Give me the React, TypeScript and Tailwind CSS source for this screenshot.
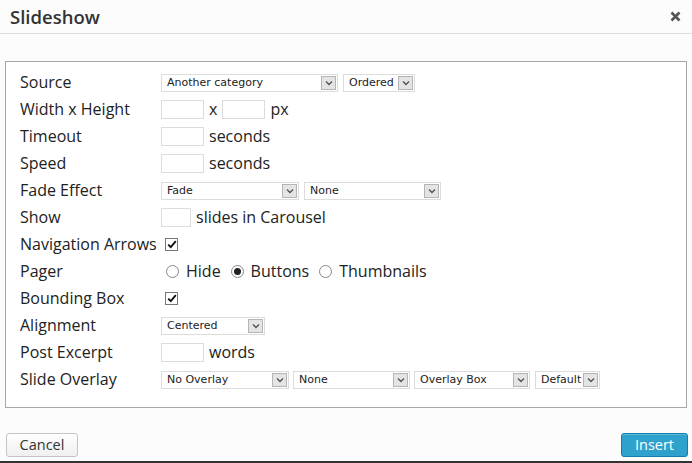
import React from "react";

const label = "font-['Open_Sans',sans-serif] text-[16px] text-[#222]";

function Select({ value, width }: { value: string; width: number }) {
  return (
    <div
      className="flex h-[18px] items-center justify-between border border-[#dcdcdc] bg-white pl-[5px] pr-[1px]"
      style={{ width }}
    >
      <span className="font-['DejaVu_Sans',Verdana,sans-serif] text-[11px] leading-none text-[#222]">{value}</span>
      <span className="flex h-[14px] w-[15px] items-center justify-center border border-[#b5b5b5] bg-[#e4e4e4]">
        <svg width="8" height="6" viewBox="0 0 8 6">
          <path d="M1 1.5 L4 4.5 L7 1.5" fill="none" stroke="#555" strokeWidth="1.4" />
        </svg>
      </span>
    </div>
  );
}

function Input({ width = 43 }: { width?: number }) {
  return <div className="h-[19px] border border-[#dcdcdc] bg-white" style={{ width }} />;
}

function Checkbox() {
  return (
    <div className="ml-[4px] flex h-[13px] w-[13px] items-center justify-center border border-[#777] bg-white">
      <svg width="10" height="9" viewBox="0 0 10 9">
        <path d="M1.2 4.6 L3.8 7.2 L8.8 1.2" fill="none" stroke="#111" strokeWidth="1.9" />
      </svg>
    </div>
  );
}

function Radio({ checked, text }: { checked?: boolean; text: string }) {
  return (
    <div className="flex items-center">
      <span className="mt-[2px] flex h-[13px] w-[13px] items-center justify-center rounded-full border border-[#888] bg-white">
        {checked && <span className="h-[7px] w-[7px] rounded-full bg-[#222]" />}
      </span>
      <span className={`${label} ml-[7px]`}>{text}</span>
    </div>
  );
}

function Row({ name, children }: { name: string; children?: React.ReactNode }) {
  return (
    <div className="flex h-[27px] items-center">
      <div className={`${label} w-[141px] shrink-0`}>{name}</div>
      <div className="flex items-center pt-[2px]">{children}</div>
    </div>
  );
}

export default function App() {
  return (
    <div className="flex h-[463px] w-[692px] flex-col bg-[#fcfcfc] border-b-2 border-[#333]">
      <div className="flex h-[34px] shrink-0 items-center justify-between border-b border-[#dddddd] pl-[10px] pr-[11px]">
        <h1 className="font-['Open_Sans',sans-serif] text-[18.5px] font-semibold text-[#333]">Slideshow</h1>
        <svg width="11" height="11" viewBox="0 0 11 11">
          <path d="M1.5 1.5 L9.5 9.5 M9.5 1.5 L1.5 9.5" stroke="#555" strokeWidth="2.6" />
        </svg>
      </div>

      <div className="ml-[5px] mt-[27px] h-[347px] w-[682px] border border-[#a8a8a8] bg-white pl-[14px] pt-[6px]">
        <Row name="Source">
          <Select value="Another category" width={177} />
          <div className="ml-[5px]">
            <Select value="Ordered" width={72} />
          </div>
        </Row>
        <Row name="Width x Height">
          <Input />
          <span className={`${label} ml-[5px] -mt-[2px]`}>x</span>
          <div className="ml-[5px]">
            <Input />
          </div>
          <span className={`${label} ml-[5px] -mt-[2px]`}>px</span>
        </Row>
        <Row name="Timeout">
          <Input />
          <span className={`${label} ml-[5px] -mt-[2px]`}>seconds</span>
        </Row>
        <Row name="Speed">
          <Input />
          <span className={`${label} ml-[5px] -mt-[2px]`}>seconds</span>
        </Row>
        <Row name="Fade Effect">
          <Select value="Fade" width={138} />
          <div className="ml-[5px]">
            <Select value="None" width={137} />
          </div>
        </Row>
        <Row name="Show">
          <Input width={30} />
          <span className={`${label} ml-[5px] -mt-[2px]`}>slides in Carousel</span>
        </Row>
        <Row name="Navigation Arrows">
          <Checkbox />
        </Row>
        <Row name="Pager">
          <div className="ml-[5px] -mt-[2px] flex items-center gap-[10px]">
            <Radio text="Hide" />
            <Radio checked text="Buttons" />
            <Radio text="Thumbnails" />
          </div>
        </Row>
        <Row name="Bounding Box">
          <Checkbox />
        </Row>
        <Row name="Alignment">
          <Select value="Centered" width={104} />
        </Row>
        <Row name="Post Excerpt">
          <Input />
          <span className={`${label} ml-[5px] -mt-[2px]`}>words</span>
        </Row>
        <Row name="Slide Overlay">
          <Select value="No Overlay" width={128} />
          <div className="ml-[4px]">
            <Select value="None" width={117} />
          </div>
          <div className="ml-[4px]">
            <Select value="Overlay Box" width={116} />
          </div>
          <div className="ml-[5px]">
            <Select value="Default" width={65} />
          </div>
        </Row>
      </div>

      <div className="mt-[25px] flex items-start justify-between pl-[6px] pr-[4px]">
        <button className="h-[24px] w-[72px] rounded-[3px] border border-[#c4c4c4] bg-gradient-to-b from-[#fefefe] to-[#f0f0f0] font-['Open_Sans',sans-serif] text-[14.5px] text-[#333] shadow-[inset_0_1px_0_#fff]">
          Cancel
        </button>
        <button className="h-[24px] w-[67px] rounded-[3px] border border-[#0f7fab] bg-[#2ea2cc] font-['Open_Sans',sans-serif] text-[14.5px] text-white shadow-[inset_0_1px_0_rgba(120,200,230,0.6)]">
          Insert
        </button>
      </div>
    </div>
  );
}
